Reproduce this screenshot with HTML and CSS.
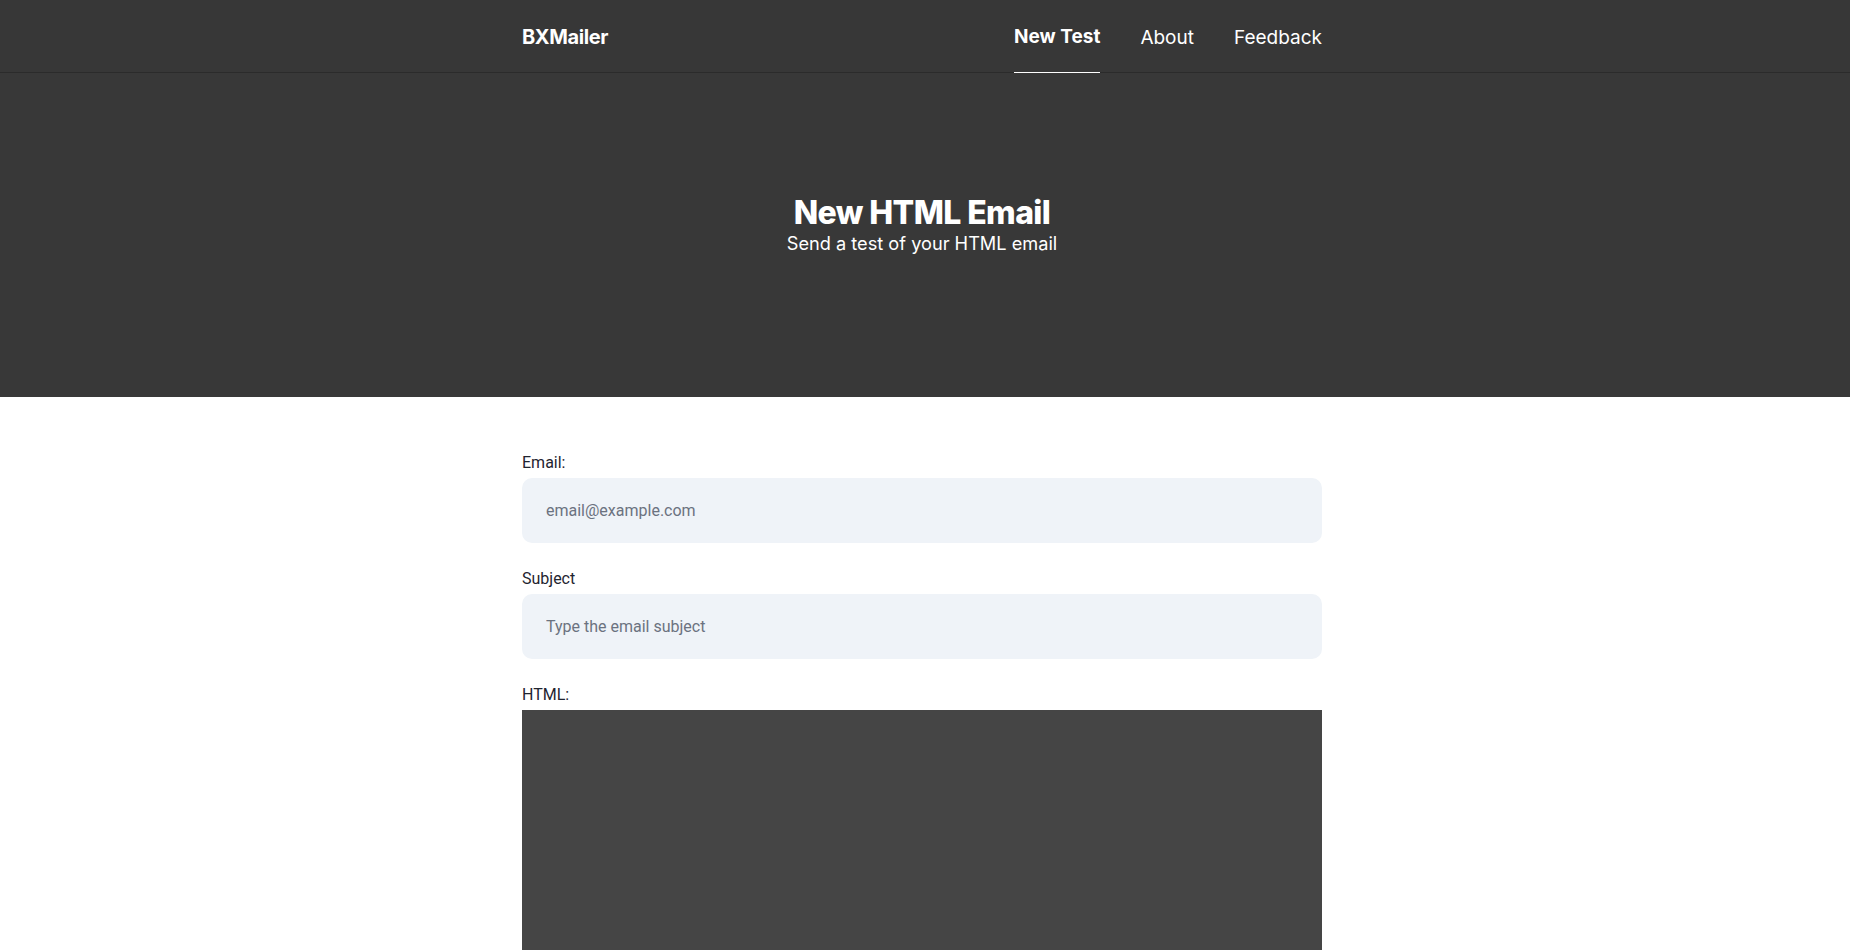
FILE: index.html
```html
<!DOCTYPE html>
<html lang="en">
<head>
<meta charset="utf-8">
<title>BXMailer - New Test</title>
<link rel="stylesheet" href="styles.css">
</head>
<body>
<header class="topbar">
  <div class="container topbar-inner">
    <a class="logo" href="#">BXMailer</a>
    <nav class="nav">
      <a class="nav-link active" href="#">New Test</a>
      <a class="nav-link" href="#">About</a>
      <a class="nav-link" href="#">Feedback</a>
    </nav>
  </div>
</header>
<section class="hero">
  <h1 class="hero-title">New HTML Email</h1>
  <p class="hero-sub">Send a test of your HTML email</p>
</section>
<main class="container form">
  <div class="field">
    <label class="label" for="email">Email:</label>
    <input class="input" id="email" type="email" placeholder="email@example.com">
  </div>
  <div class="field">
    <label class="label" for="subject">Subject</label>
    <input class="input" id="subject" type="text" placeholder="Type the email subject">
  </div>
  <div class="field">
    <label class="label" for="html">HTML:</label>
    <textarea class="code" id="html"></textarea>
  </div>
</main>
</body>
</html>
```
FILE: styles.css
```css
* { box-sizing: border-box; }
html, body { margin: 0; padding: 0; }
body {
  background: #ffffff;
  font-family: Inter, "Noto Sans", sans-serif;
  color: #1f2937;
}
.container {
  width: 800px;
  margin-left: calc(50% - 403px);
}
.topbar {
  background: #373737;
  border-bottom: 1px solid #2b2b2b;
  height: 73px;
}
.topbar-inner {
  display: flex;
  align-items: stretch;
  justify-content: space-between;
  height: 72px;
}
.logo {
  display: flex;
  align-items: center;
  padding-top: 2px;
  color: #ffffff;
  text-decoration: none;
  font-weight: 700;
  font-size: 20px;
  letter-spacing: -0.4px;
}
.nav {
  display: flex;
  gap: 40px;
}
.nav-link {
  display: flex;
  align-items: center;
  color: #ffffff;
  text-decoration: none;
  font-size: 19px;
  padding-top: 3px;
  padding-bottom: 1px;
  border-bottom: 1px solid transparent;
  margin-bottom: -1px;
}
.nav-link.active {
  font-weight: 700;
  border-bottom-color: #ffffff;
  padding-bottom: 3px;
}
.hero {
  background: #383838;
  height: 324px;
  display: flex;
  flex-direction: column;
  align-items: center;
  justify-content: center;
  padding-bottom: 22px;
  padding-right: 6px;
  color: #ffffff;
}
.hero-title {
  margin: 0;
  font-size: 32px;
  font-weight: 800;
  letter-spacing: -0.6px;
  line-height: 38px;
}
.hero-sub {
  margin: 0;
  font-size: 18.2px;
  line-height: 22px;
}
.form {
  padding-top: 54px;
}
.field {
  margin-bottom: 24px;
}
.label {
  display: block;
  font-family: Roboto, "Noto Sans", sans-serif;
  font-size: 16px;
  line-height: 24px;
  color: #1f2430;
  margin-bottom: 3px;
}
.input {
  display: block;
  width: 100%;
  height: 65px;
  border: none;
  border-radius: 10px;
  background: #eff3f8;
  padding: 0 24px;
  font-family: Roboto, "Noto Sans", sans-serif;
  font-size: 16px;
  color: #1f2430;
  outline: none;
}
.input::placeholder {
  color: #6b7280;
}
.code {
  display: block;
  width: 100%;
  height: 400px;
  border: none;
  border-radius: 0;
  background: #454545;
  resize: none;
  outline: none;
}
```
